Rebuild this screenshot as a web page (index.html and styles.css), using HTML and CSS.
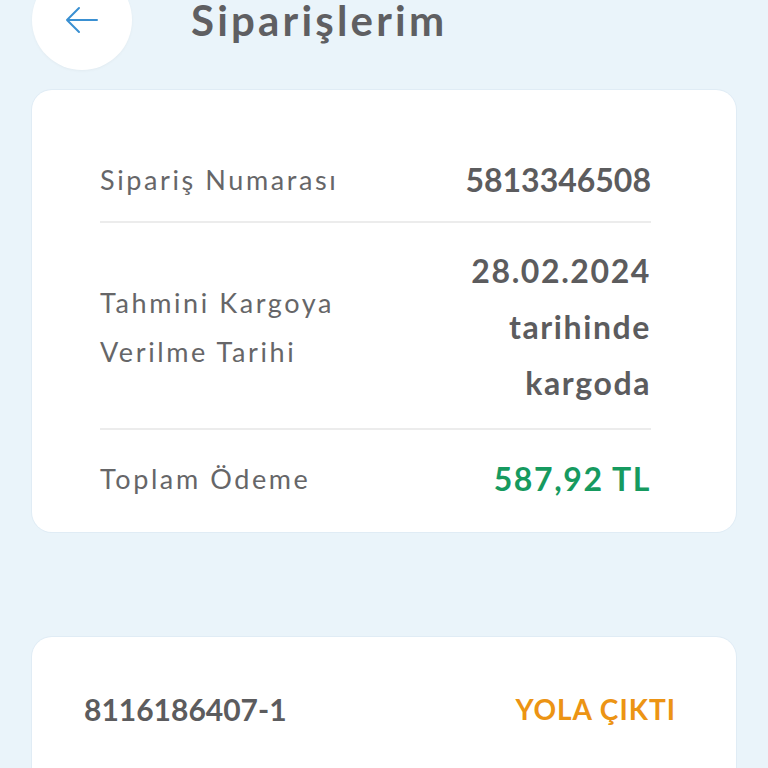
FILE: index.html
```html
<!DOCTYPE html>
<html lang="tr">
<head>
<meta charset="utf-8">
<link rel="stylesheet" href="styles.css">
</head>
<body>
<div class="page">
  <header class="topbar">
    <div class="back">
      <svg width="40" height="40" viewBox="0 0 40 40" fill="none" stroke="#3a90d2" stroke-width="2" stroke-linecap="round" stroke-linejoin="round">
        <path d="M35 20H5M17 8L5 20l12 12"/>
      </svg>
    </div>
    <h1 class="title">Siparişlerim</h1>
  </header>

  <section class="card summary">
    <div class="row row-first">
      <span class="label">Sipariş Numarası</span>
      <span class="value">5813346508</span>
    </div>
    <div class="row row-mid">
      <span class="label">Tahmini Kargoya<br>Verilme Tarihi</span>
      <span class="value value-multi">28.02.2024<br>tarihinde<br>kargoda</span>
    </div>
    <div class="row row-last">
      <span class="label">Toplam Ödeme</span>
      <span class="value green">587,92 TL</span>
    </div>
  </section>

  <section class="card order">
    <div class="order-row">
      <span class="order-no">8116186407-1</span>
      <span class="status">YOLA ÇIKTI</span>
    </div>
  </section>
</div>
</body>
</html>
```

FILE: styles.css
```css
html, body {
  margin: 0;
  padding: 0;
  background: #eaf4fa;
  font-family: Lato, "Noto Sans", sans-serif;
  color: #5f5f62;
}
.page {
  width: 768px;
  height: 768px;
  overflow: hidden;
  padding: 0 32px;
  box-sizing: border-box;
}
.topbar {
  display: flex;
  align-items: flex-start;
  height: 90px;
  gap: 59px;
}
.back {
  width: 100px;
  height: 100px;
  border-radius: 50%;
  background: #fff;
  display: flex;
  align-items: center;
  justify-content: center;
  flex: none;
  margin-top: -30px;
  box-shadow: 0 1px 3px rgba(0,0,0,0.04);
}
.title {
  margin: 0;
  font-size: 42px;
  line-height: 40px;
  padding-bottom: 6px;
  font-weight: 700;
  letter-spacing: 3.2px;
  color: #5f5f62;
}
.card {
  background: #fff;
  border-radius: 20px;
  box-shadow: 0 0 0 1px #e0ecf5;
}
.summary {
  padding: 48px 85px 33px 68px;
}
.row {
  display: flex;
  justify-content: space-between;
  align-items: center;
  border-bottom: 2px solid #ececec;
}
.row-first { padding: 22px 0 21px; }
.row-mid { padding: 20px 0 17px; }
.row-last { padding: 29px 0 0; border-bottom: none; }
.label {
  font-size: 27px;
  line-height: 49px;
  color: #666668;
  letter-spacing: 2.6px;
}
.row-first .label, .row-last .label { line-height: 40px; }
.value {
  font-size: 32px;
  font-weight: 700;
  line-height: 40px;
  text-align: right;
  color: #5c5c5e;
}
.value-multi { line-height: 56px; letter-spacing: 1.6px; }
.green { color: #169a5f; letter-spacing: 1.6px; }
.order {
  margin-top: 105px;
  height: 200px;
}
.order-row {
  display: flex;
  justify-content: space-between;
  align-items: center;
  padding: 52px 60px 0 52px;
}
.order-no {
  font-size: 30px;
  font-weight: 700;
  line-height: 40px;
  color: #5c5c5e;
}
.status {
  font-size: 28px;
  font-weight: 700;
  line-height: 40px;
  letter-spacing: 1px;
  color: #ec9414;
}
```
